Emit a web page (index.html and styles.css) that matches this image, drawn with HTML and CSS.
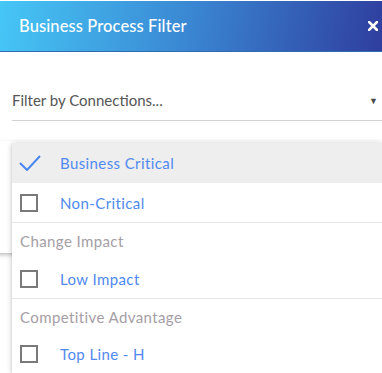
FILE: index.html
```html
<!DOCTYPE html>
<html lang="en">
<head>
    <meta charset="UTF-8">
    <meta name="viewport" content="width=device-width, initial-scale=1.0">
    <title>Business Process Filter</title>
    <link rel="stylesheet" href="styles.css">
</head>
<body>
    <div class="modal">
        <div class="modal-header">
            <h1>Business Process Filter</h1>
            <button class="close" aria-label="Close">
                <svg width="10" height="10" viewBox="0 0 10 10">
                    <path d="M1 1 L9 9 M9 1 L1 9" stroke="#fff" stroke-width="2.6" stroke-linecap="square"/>
                </svg>
            </button>
        </div>

        <div class="modal-body">
            <div class="dropdown">
                <div class="select">
                    <span>Filter by Connections...</span>
                    <span class="caret">&#9660;</span>
                </div>

                <ul class="menu">
                    <li class="item selected">
                        <svg class="check" width="22" height="16" viewBox="0 0 22 16">
                            <path d="M1 8 L8 15 L21 1" fill="none" stroke="#4a86ee" stroke-width="2"/>
                        </svg>
                        <span>Business Critical</span>
                    </li>
                    <li class="item sep">
                        <span class="box"></span>
                        <span>Non-Critical</span>
                    </li>
                    <li class="group">Change Impact</li>
                    <li class="item sep">
                        <span class="box"></span>
                        <span>Low Impact</span>
                    </li>
                    <li class="group">Competitive Advantage</li>
                    <li class="item last">
                        <span class="box"></span>
                        <span>Top Line - H</span>
                    </li>
                </ul>
            </div>

            <div class="panel"></div>
        </div>
    </div>
</body>
</html>
```

FILE: styles.css
```css
:root {
    --header-light: #46c7f6;
    --header-mid: #3a86d2;
    --header-dark: #2f3e9e;
    --item-color: #5089f0;
    --group-color: #a59ea5;
    --line-color: #e6e6e6;
}

html, body {
    min-height: 373px;
}

body {
    margin: 0;
    background: #fff;
    font-family: Lato, "Open Sans", sans-serif;
}

.modal {
    min-height: 373px;
}

.modal-header {
    margin-top: 1px;
    height: 50px;
    display: flex;
    align-items: center;
    justify-content: space-between;
    padding: 0 4px 0 19px;
    background: linear-gradient(100deg, var(--header-light) 0%, var(--header-mid) 50%, var(--header-dark) 100%);
    border-bottom: 1px solid #2f6bb3;
}

.modal-header h1 {
    margin: 0;
    color: #fff;
    font-size: 16.5px;
    font-weight: 500;
    letter-spacing: 0.1px;
}

.close {
    background: none;
    border: none;
    padding: 0;
    width: 10px;
    height: 10px;
    display: flex;
}

.modal-body {
    padding-top: 28px;
}

.dropdown {
    position: relative;
    z-index: 2;
}

.select {
    margin-left: 12px;
    height: 40px;
    display: flex;
    align-items: center;
    justify-content: space-between;
    padding-right: 4px;
    border-bottom: 1px solid #d2d2d2;
    color: #555;
    font-size: 15px;
}

.caret {
    font-size: 9px;
    color: #4a4a4a;
}

.panel {
    position: relative;
    z-index: 1;
    margin: 20px 0 0 -10px;
    height: 112px;
    background: #fff;
    box-shadow: 0 2px 4px rgba(0, 0, 0, 0.25);
}

.menu {
    position: absolute;
    top: calc(100% + 22px);
    left: 12px;
    right: 0;
    margin: 0;
    padding: 0;
    list-style: none;
    background: #fff;
    box-shadow: 0 1px 5px rgba(0, 0, 0, 0.28);
}

.item {
    height: 39px;
    display: flex;
    align-items: center;
    padding-left: 8px;
    color: var(--item-color);
    font-size: 15px;
    letter-spacing: 0.4px;
}

.item.selected {
    height: 40px;
    background: #eeeeee;
}

.item.sep {
    border-bottom: 1px solid var(--line-color);
}

.item.last {
    height: 38px;
}

.check {
    margin-left: -1px;
    margin-right: 19px;
}

.box {
    width: 14px;
    height: 14px;
    border: 2px solid #7a7a7a;
    margin-right: 22px;
}

.group {
    height: 36px;
    display: flex;
    align-items: center;
    padding-left: 8px;
    color: var(--group-color);
    font-size: 15px;
    letter-spacing: 0.4px;
}
```
